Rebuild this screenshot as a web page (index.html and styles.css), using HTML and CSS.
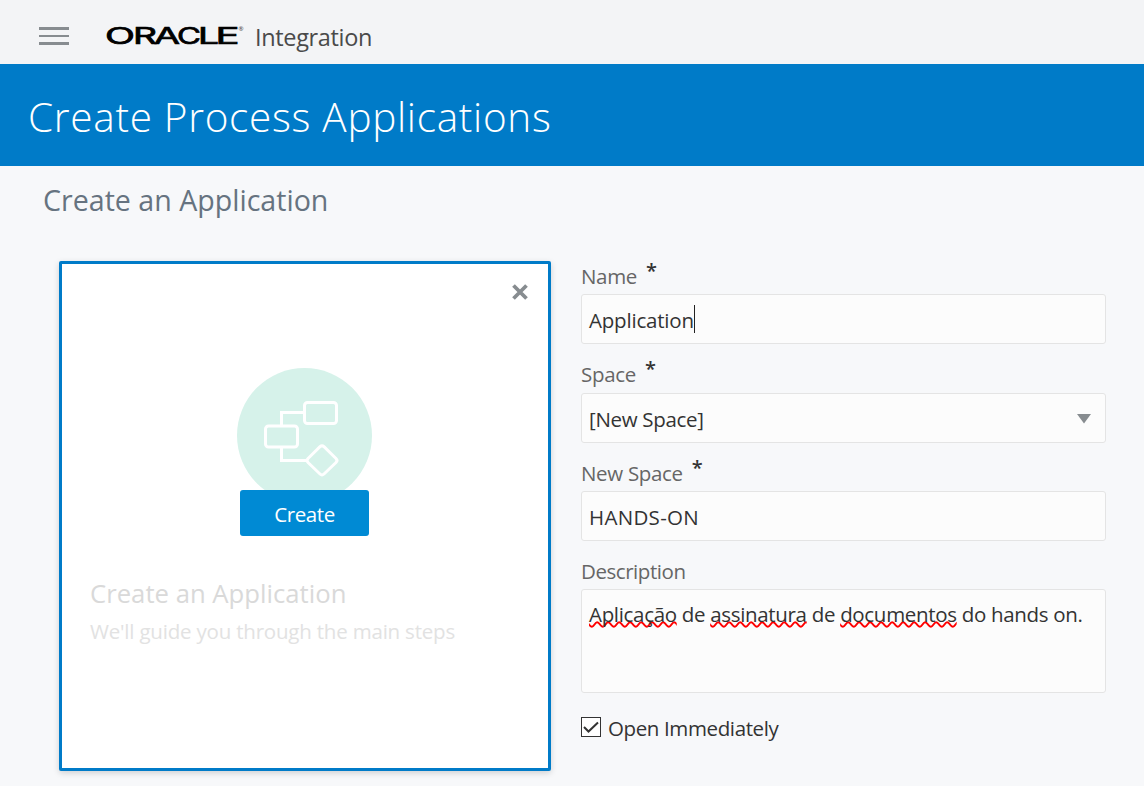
FILE: index.html
```
<!DOCTYPE html>
<html lang="en">
<head>
<meta charset="utf-8">
<title>Create Process Applications</title>
<link rel="stylesheet" href="styles.css">
</head>
<body>
<header class="topbar">
  <button class="menu" aria-label="Menu"><span></span><span></span><span></span></button>
  <svg class="logo" width="140" height="24" viewBox="0 0 140 24" role="img" aria-label="Oracle">
    <g class="logo-text">
      <text x="-1" y="21.500" textLength="30" lengthAdjust="spacingAndGlyphs">O</text>
      <text x="27" y="21.500" textLength="24" lengthAdjust="spacingAndGlyphs">R</text>
      <text x="48" y="21.500" textLength="26" lengthAdjust="spacingAndGlyphs">A</text>
      <text x="71" y="21.500" textLength="24" lengthAdjust="spacingAndGlyphs">C</text>
      <text x="92" y="21.500" textLength="21" lengthAdjust="spacingAndGlyphs">L</text>
      <text x="109.500" y="21.500" textLength="24" lengthAdjust="spacingAndGlyphs">E</text>
    </g>
    <text class="logo-reg" x="132.500" y="8.500">®</text>
  </svg>
  <span class="product">Integration</span>
</header>
<div class="banner"><h1>Create Process Applications</h1></div>
<main>
  <h2>Create an Application</h2>
  <div class="columns">
    <section class="card">
      <button class="close" aria-label="Close">
        <svg width="16" height="16" viewBox="0 0 16 16"><path d="M1.500 1.500L14.500 14.500M14.500 1.500L1.500 14.500"/></svg>
      </button>
      <svg class="process" width="136" height="122" viewBox="0 0 136 122">
        <circle cx="67.5" cy="67.5" r="67.5"/>
        <g>
          <rect x="67.500" y="34.500" width="32" height="21" rx="3"/>
          <rect x="28.500" y="58" width="32" height="21" rx="3"/>
          <path d="M67 44.500H44.500V58M44.500 80V92.500H70"/>
          <path d="M71 90.500L83 78.700Q85 77 87 78.700L99 90.500Q101 92.500 99 94.500L87 106Q85 107.800 83 106L71 94.500Q69 92.500 71 90.500Z"/>
        </g>
      </svg>
      <button class="create">Create</button>
      <div class="caption">
        <h3>Create an Application</h3>
        <p>We'll guide you through the main steps</p>
      </div>
    </section>
    <form class="form">
      <div class="label"><span>Name</span><b>*</b></div>
      <div class="field name"><span>Application</span><i class="caret"></i></div>
      <div class="label"><span>Space</span><b>*</b></div>
      <div class="field select"><span class="space">[New Space]</span><svg width="14" height="10" viewBox="0 0 14 10"><path d="M0 0H14L7 9.500Z"/></svg></div>
      <div class="label"><span>New Space</span><b>*</b></div>
      <div class="field"><span class="value">HANDS-ON</span></div>
      <div class="label"><span class="desc">Description</span></div>
      <div class="field area"><span class="note"><u>Aplicação</u> de <u>assinatura</u> de <u>documentos</u> do hands on.</span></div>
      <div class="check">
        <svg width="20" height="20" viewBox="0 0 20 20"><rect x=".5" y=".5" width="19" height="19"/><path d="M3 10L7.500 14.500L17 5.500"/></svg>
        <span>Open Immediately</span>
      </div>
    </form>
  </div>
</main>
</body>
</html>
```
FILE: styles.css
```
* { box-sizing: border-box; }
body { margin: 0; height: 786px; overflow: hidden; background: #f7f8fa; color: #333; font-family: "Open Sans", "Noto Sans", sans-serif; font-size: 20.500px; line-height: 28px; }
h1, h2, h3, p { margin: 0; font-weight: 400; white-space: nowrap; }
button { border: 0; padding: 0; background: none; font: inherit; }
.topbar { display: flex; align-items: flex-start; height: 64px; padding-left: 39px; background: #f3f4f6; }
.menu { display: flex; flex-direction: column; gap: 5px; width: 30px; margin-top: 27px; }
.menu span { height: 2.700px; width: 30px; background: #878c90; }
.logo { margin: 22px 0 0 37px; overflow: visible; }
.logo-text { font-family: "Inter", sans-serif; font-weight: 400; font-size: 23px; fill: #000; stroke: #000; stroke-width: 0.700px; }
.logo-reg { font-size: 6px; fill: #333; }
.product { margin: 22px 0 0 9px; font-size: 23.500px; line-height: 30px; color: #4a4a4a; letter-spacing: -0.350px; }
.banner { height: 102px; padding: 24px 0 0 28px; background: #007bc8; color: #fff; }
.banner h1 { font-weight: 300; font-size: 40.500px; line-height: 58px; letter-spacing: 0.700px; }
main { padding: 14px 38px 0 43px; }
h2 { font-size: 28.600px; line-height: 40px; color: #667380; }
.columns { display: flex; gap: 30px; margin: 41px 0 0 16px; }
.card { display: flex; flex-direction: column; align-items: center; width: 492px; height: 510px; border: 3px solid #007bc8; border-radius: 2px; background: #fff; box-shadow: 0 2px 6px rgba(0,0,0,.16); }
.close { display: flex; align-self: flex-end; margin: 20px 20px 0 0; }
.close path { stroke: #878c90; stroke-width: 3.800; }
.process { margin-top: 68px; }
.process circle { fill: #d6f2ea; }
.process g { fill: none; stroke: #fff; stroke-width: 3; }
.create { width: 129px; height: 46px; margin-right: 1px; padding-top: 1px; border-radius: 3px; background: #008ad4; color: #fff; letter-spacing: -0.400px; }
.caption { align-self: stretch; padding: 40px 0 0 28px; }
.caption h3 { font-size: 25.700px; line-height: 36px; color: #d9d9d9; }
.caption p { line-height: 30px; margin-top: 4px; color: #e2e2e2; letter-spacing: -0.200px; }
.form { width: 525px; letter-spacing: -0.320px; }
.label { display: flex; height: 33px; color: #666; padding-top: 1px; line-height: 28px; }
.label b { margin: -5px 0 0 9px; font-weight: 600; color: #333; font-size: 20px; }
.field { display: flex; align-items: center; height: 50px; margin-bottom: 15px; padding: 2px 14px 0 7px; border: 1px solid #e4e4e4; border-radius: 3px; background: #fcfcfc; }
.name { margin-bottom: 16px; letter-spacing: -0.200px; }
.name + .label { margin-top: -1px; margin-bottom: 1px; }
.caret { width: 1px; height: 28px; background: #222; margin-top: -3px; }
.select { justify-content: space-between; padding-top: 1px; }
.select path { fill: #878c90; }
.value { letter-spacing: 0.300px; }
.label .desc { letter-spacing: -0.450px; }
.field.area { height: 104px; align-items: flex-start; padding-top: 10px; margin: 0 0 22px; }
.note { white-space: nowrap; }
.note u { text-decoration: underline wavy #f00 1.800px; text-underline-offset: -1px; text-decoration-skip-ink: none; }
.check { display: flex; gap: 7px; line-height: 28px; }
.check span { margin-top: -1px; letter-spacing: -0.380px; }
.check svg { margin-top: 2px; }
.check rect { fill: #fff; stroke: #333; }
.check path { fill: none; stroke: #333; stroke-width: 2; }
```
